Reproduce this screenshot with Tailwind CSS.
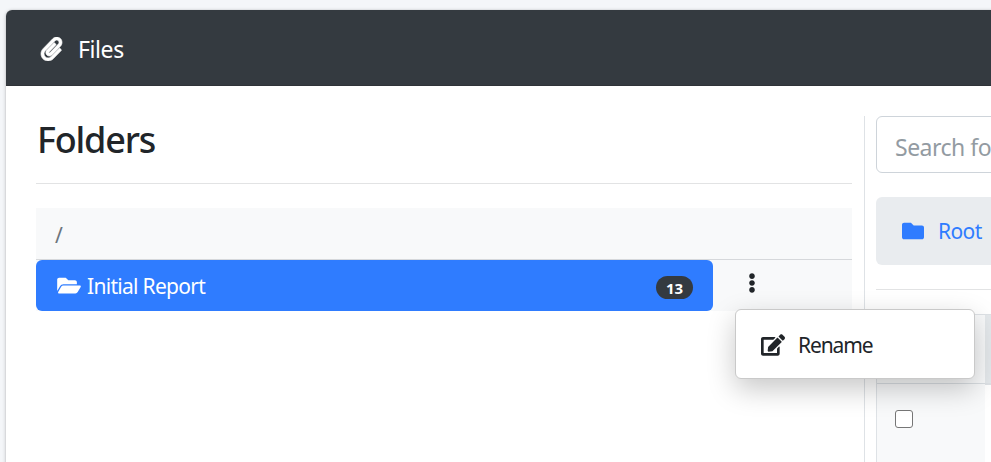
<!DOCTYPE html>
<html lang="en">
<head>
    <meta charset="UTF-8">
    <meta name="viewport" content="width=device-width, initial-scale=1.0">
    <title>Files</title>
    <script src="https://cdn.jsdelivr.net/npm/@tailwindcss/browser@4"></script>
</head>
<body class="bg-[#f4f6f9] text-[#212529] font-['Noto_Sans','Open_Sans',sans-serif] h-screen overflow-hidden pt-[10px] pl-[6px]">
    <div class="bg-white w-[1100px] h-[600px] rounded-md shadow-[0_0_2px_rgba(0,0,0,.13),0_1px_4px_rgba(0,0,0,.2)]">
        <!-- Card header -->
        <div class="flex items-center h-[76px] pl-[34px] pb-px bg-[#343a40] text-white rounded-t-md border-b border-[#2f3338]">
            <svg class="w-[23px] h-6 mt-1" viewBox="0 0 448 512" fill="currentColor" stroke="currentColor" stroke-width="14"><path d="M43.246 466.142c-58.43-60.289-57.341-157.511 1.386-217.581L254.392 34c44.316-45.332 116.351-45.336 160.671 0 43.89 44.894 43.943 117.329 0 162.276L232.214 383.128c-29.855 30.537-78.633 30.111-107.982-.998-28.275-29.97-27.368-77.473 1.452-106.953l143.743-146.835c6.182-6.314 16.312-6.422 22.626-.241l22.861 22.379c6.315 6.182 6.422 16.312.241 22.626L171.427 319.927c-4.932 5.045-5.236 13.428-.648 18.292 4.372 4.634 11.245 4.711 15.688.165l182.849-186.851c19.613-20.062 19.613-52.725-.011-72.798-19.189-19.627-49.957-19.637-69.154 0L90.39 293.295c-34.763 35.56-35.299 93.12-1.191 128.313 34.01 35.093 88.985 35.137 123.058.286l172.06-175.999c6.177-6.319 16.307-6.433 22.626-.256l22.877 22.364c6.319 6.177 6.434 16.307.256 22.626l-172.06 175.998c-59.576 60.938-155.943 60.216-214.77-.485z"/></svg>
            <h3 class="ml-[15px] mt-[3px] text-[23px] leading-8 tracking-[-0.4px]">Files</h3>
        </div>

        <div class="flex pt-[30px] pl-[30px] h-[524px]">
            <!-- Folder list -->
            <div class="w-[816px] shrink-0">
                <h2 class="h-[67px] pl-px text-[36px] leading-[47px] font-medium tracking-[-1.2px]">Folders</h2>
                <hr class="border-[#e2e3e4] mb-6">
                <div class="h-[52px] pl-[19px] bg-[#f8f9fa] border-b border-[#d6d8db] text-[21px] leading-[54px] text-[#6c757d]">/</div>
                <div class="flex h-[51px] bg-[#f8f9fa]">
                    <div class="flex items-center w-[677px] pl-[21px] pr-5 rounded-md bg-[#2f7cff] text-white">
                        <svg class="w-6 h-[21px]" viewBox="0 0 576 512" fill="currentColor"><path d="M572.694 292.093L500.27 416.248A63.997 63.997 0 0 1 444.989 448H45.025c-18.523 0-30.064-20.093-20.731-36.093l72.424-124.155A64 64 0 0 1 152 256h399.964c18.523 0 30.064 20.093 20.73 36.093zM152 224h328v-48c0-26.51-21.49-48-48-48H272l-64-64H48C21.49 64 0 85.49 0 112v278.046l69.077-118.418C86.214 242.25 117.989 224 152 224z"/></svg>
                        <span class="ml-[6px] mt-[3px] text-[21px] tracking-[-0.7px]">Initial Report</span>
                        <span class="ml-auto mt-1 w-[37px] h-[23px] rounded-full bg-[#343a40] text-center text-[15px] leading-[24px] font-bold">13</span>
                    </div>
                    <!-- Actions toggle and its menu -->
                    <div class="relative pl-[35px] pt-[13px]">
                        <svg class="w-[8px] h-5" viewBox="0 0 192 512" fill="currentColor"><path d="M96 184c39.8 0 72 32.2 72 72s-32.2 72-72 72-72-32.2-72-72 32.2-72 72-72zM24 80c0 39.8 32.2 72 72 72s72-32.2 72-72S135.8 8 96 8 24 40.2 24 80zm0 352c0 39.8 32.2 72 72 72s72-32.2 72-72-32.2-72-72-72-72 32.2-72 72z"/></svg>
                        <div class="absolute z-10 left-[22px] top-[49px] flex items-center w-[240px] h-[70px] pl-[25px] bg-white border border-[#c9c9c9] rounded-md shadow-[0_10px_28px_rgba(0,0,0,.22)]">
                            <svg class="w-6 h-[22px] mt-px" viewBox="0 0 576 512" fill="currentColor"><path d="M402.6 83.2l90.2 90.2c3.8 3.8 3.8 10 0 13.8L274.4 405.6l-92.8 10.3c-12.4 1.4-22.9-9.1-21.5-21.5l10.3-92.8L388.8 83.2c3.8-3.8 10-3.8 13.8 0zm162-22.9l-48.8-48.8c-15.2-15.2-39.9-15.2-55.2 0l-35.4 35.4c-3.8 3.8-3.8 10 0 13.8l90.2 90.2c3.8 3.8 10 3.8 13.8 0l35.4-35.4c15.2-15.3 15.2-40 0-55.2zM384 346.2V448H64V128h229.8c3.2 0 6.2-1.3 8.5-3.5l40-40c7.6-7.6 2.2-20.5-8.5-20.5H48C21.5 64 0 85.5 0 112v352c0 26.5 21.5 48 48 48h352c26.5 0 48-21.5 48-48V306.2c0-10.7-12.9-16-20.5-8.5l-40 40c-2.2 2.3-3.5 5.3-3.5 8.5z"/></svg>
                            <span class="ml-[13px] mt-1 text-[21px] tracking-[-1.1px]">Rename</span>
                        </div>
                    </div>
                </div>
            </div>

            <!-- Files in the folder -->
            <div class="ml-3 pl-[11px] w-[300px] shrink-0 border-l border-[#dee2e6]">
                <input type="text" placeholder="Search folder" class="block w-full h-[57px] pl-[18px] pt-[4px] border border-[#ced4da] rounded-md text-[23px] tracking-[-0.5px] placeholder:text-[#939ba2]">
                <div class="flex items-center mt-6 h-[68px] pl-[26px] rounded-md bg-[#e9ecef] text-[#2f7cff]">
                    <svg class="w-[22px] h-[22px]" viewBox="0 0 512 512" fill="currentColor"><path d="M464 128H272l-64-64H48C21.49 64 0 85.49 0 112v288c0 26.51 21.49 48 48 48h416c26.51 0 48-21.49 48-48V176c0-26.51-21.49-48-48-48z"/></svg>
                    <span class="ml-[14px] mt-[2px] text-[21px] tracking-[-0.6px]">Root</span>
                </div>
                <hr class="mt-6 mb-6 border-[#e2e3e4]">
                <div class="flex">
                    <div class="w-[109px] h-[200px] bg-[#f8f9fa] border-l border-t border-[#dee2e6]">
                        <div class="h-[69px] border-b border-[#d9dee2]"></div>
                        <div class="pt-[26px] pl-[18px]">
                            <input type="checkbox" class="block appearance-none w-[18px] h-[18px] bg-white border-[1.5px] border-[#767676] rounded-[3px]">
                        </div>
                    </div>
                    <div class="w-[100px] h-[71px] bg-[#e4e8eb] border-t border-b-2 border-[#dee2e6]"></div>
                </div>
            </div>
        </div>
    </div>
</body>
</html>
